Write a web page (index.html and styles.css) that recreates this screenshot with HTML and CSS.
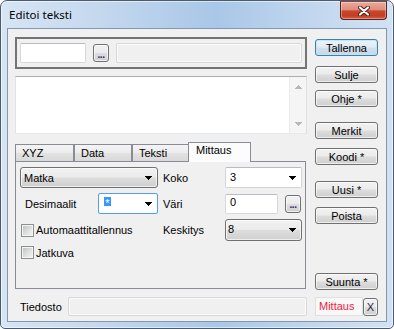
FILE: index.html
```html
<!DOCTYPE html>
<html>
<head>
<meta charset="utf-8">
<link rel="stylesheet" href="styles.css">
</head>
<body>
<div class="window">
  <div class="titlebar">
    <span class="title">Editoi teksti</span>
    <div class="close">
      <svg width="14" height="10" viewBox="0 0 14 10"><path d="M3 1.5 L11 8.5 M11 1.5 L3 8.5" stroke="#4a1b12" stroke-width="4" stroke-linecap="round"/><path d="M3 1.5 L11 8.5 M11 1.5 L3 8.5" stroke="#ffffff" stroke-width="2.2" stroke-linecap="round"/></svg>
    </div>
  </div>
  <div class="client">
    <div class="main">
      <div class="left">
        <div class="group">
          <div class="edit e1"></div>
          <div class="btn dots">...</div>
          <div class="edit disabled e2"></div>
        </div>
        <div class="memo">
          <div class="memo-text"></div>
          <div class="vscroll">
            <svg class="sarrow" width="7" height="4" viewBox="0 0 7 4"><path d="M3 0h1v1h1v1h1v1h1v1h-7v-1h1v-1h1v-1h1z" fill="#b8b8b8"/></svg>
            <svg class="sarrow" width="7" height="4" viewBox="0 0 7 4"><path d="M0 0h7v1h-1v1h-1v1h-1v1h-1v-1h-1v-1h-1v-1h-1z" fill="#b8b8b8"/></svg>
          </div>
        </div>
        <div class="tabs">
          <div class="tab t1">XYZ</div>
          <div class="tab t2">Data</div>
          <div class="tab t3">Teksti</div>
          <div class="tab active t4">Mittaus</div>
        </div>
        <div class="panel">
          <div class="pgrid">
            <div class="combo cbtn matka"><span>Matka</span><svg class="arrow" width="7" height="4" viewBox="0 0 7 4"><path d="M0 0h7v1h-1v1h-1v1h-1v1h-1v-1h-1v-1h-1v-1h-1z" fill="#000"/></svg></div>
            <div class="lbl">Koko</div>
            <div class="combo cedit"><span class="raise">3</span><svg class="arrow" width="7" height="4" viewBox="0 0 7 4"><path d="M0 0h7v1h-1v1h-1v1h-1v1h-1v-1h-1v-1h-1v-1h-1z" fill="#000"/></svg></div>

            <div class="cell">
              <span class="deslbl">Desimaalit</span>
              <div class="combo cedit focus"><span class="sel">*</span><svg class="arrow" width="7" height="4" viewBox="0 0 7 4"><path d="M0 0h7v1h-1v1h-1v1h-1v1h-1v-1h-1v-1h-1v-1h-1z" fill="#000"/></svg></div>
            </div>
            <div class="lbl">Väri</div>
            <div class="cell">
              <div class="edit e0"><span class="raise">0</span></div>
              <div class="btn dots">...</div>
            </div>

            <div class="cell chk"><span class="cb"></span><span class="cblbl">Automaattitallennus</span></div>
            <div class="lbl">Keskitys</div>
            <div class="combo cbtn k8"><span class="raise">8</span><svg class="arrow" width="7" height="4" viewBox="0 0 7 4"><path d="M0 0h7v1h-1v1h-1v1h-1v1h-1v-1h-1v-1h-1v-1h-1z" fill="#000"/></svg></div>

            <div class="cell chk"><span class="cb"></span><span class="cblbl">Jatkuva</span></div>
          </div>
        </div>
      </div>
      <div class="right">
        <div class="btn rb default b1">Tallenna</div>
        <div class="btn rb b2">Sulje</div>
        <div class="btn rb b3">Ohje *</div>
        <div class="btn rb b4">Merkit</div>
        <div class="btn rb b5">Koodi *</div>
        <div class="btn rb b6">Uusi *</div>
        <div class="btn rb b7">Poista</div>
        <div class="btn rb b8">Suunta *</div>
      </div>
    </div>
    <div class="bottom">
      <span class="flabel">Tiedosto</span>
      <div class="edit disabled file"></div>
      <div class="status">Mittaus</div>
      <div class="btn xbtn">X</div>
    </div>
  </div>
</div>
</body>
</html>
```
FILE: styles.css
```css
* { box-sizing: border-box; }
html, body { margin: 0; padding: 0; }
body {
  width: 394px;
  height: 329px;
  overflow: hidden;
  background: #ffffff;
  font-family: "Liberation Sans", Arial, sans-serif;
  font-size: 11px;
  color: #000;
}

.window {
  width: 394px;
  height: 329px;
  border: 1px solid #4b5b70;
  border-radius: 7px 7px 5px 5px;
  padding: 0 6px 6px 6px;
  display: flex;
  flex-direction: column;
  background: linear-gradient(to right, #d7e5f5 0%, #c4d8ee 25%, #a9c7e7 55%, #c0d6ee 78%, #d2e2f4 100%);
  box-shadow: inset 0 0 0 1px rgba(255,255,255,0.55);
}

.titlebar {
  height: 27px;
  display: flex;
  align-items: flex-start;
}
.title {
  font-family: "Noto Sans", "Open Sans", sans-serif;
  font-size: 11.5px;
  line-height: 16px;
  margin-top: 6px;
  padding-left: 2px;
  color: #000;
}
.close {
  margin-left: auto;
  width: 47px;
  height: 19px;
  border: 1px solid #5c2219;
  border-top-color: #8a4a40;
  border-radius: 0 0 4px 4px;
  background: linear-gradient(#eaaa9c 0%, #de8e7c 45%, #cb4a31 52%, #c13c23 78%, #d65a40 100%);
  box-shadow: inset 0 0 0 1px rgba(255,255,255,0.35);
  display: flex;
  align-items: center;
  justify-content: center;
}

.client {
  flex: 1;
  border: 1px solid #8597ae;
  background: #f0f0f0;
  padding: 8px 8px 0 7px;
  display: flex;
  flex-direction: column;
}

.main {
  display: flex;
  gap: 8px;
}
.left {
  width: 292px;
  display: flex;
  flex-direction: column;
}

.group {
  height: 32px;
  border: 2px solid #747474;
  display: flex;
  align-items: center;
  padding-left: 3px;
}

.edit {
  height: 20px;
  background: #ffffff;
  border: 1px solid #d6d8de;
  border-top-color: #b9bcc4;
  border-radius: 2px;
}
.edit.disabled {
  background: #f0f0f0;
  border-color: #d9d9d9;
  box-shadow: inset 0 0 0 1px #fafafa;
}
.e1 { width: 66px; }
.e2 { width: 186px; margin-left: 7px; }

.btn {
  border: 1px solid #707070;
  border-radius: 3px;
  background: linear-gradient(#f2f2f2 0%, #ebebeb 48%, #dddddd 52%, #cfcfcf 100%);
  box-shadow: inset 0 0 0 1px rgba(255,255,255,0.65);
  display: flex;
  align-items: center;
  justify-content: center;
  color: #000;
}
.dots {
  width: 16px;
  height: 18px;
  margin-left: 7px;
  color: #3c1f6e;
  font-weight: bold;
  font-size: 10px;
  line-height: 10px;
  padding-top: 3px;
  letter-spacing: -0.5px;
}

.memo {
  margin-top: 7px;
  height: 58px;
  background: #ffffff;
  border: 1px solid;
  border-color: #abadb3 #dbdfe6 #e3e9ef #e2e3ea;
  display: flex;
}
.memo-text { flex: 1; }
.vscroll {
  width: 17px;
  background: #f5f5f5;
  border-left: 1px solid #ececec;
  display: flex;
  flex-direction: column;
  justify-content: space-between;
  align-items: center;
  padding: 8px 0 7px 0;
}
.sarrow { display: block; }

.tabs {
  margin-top: 8px;
  height: 19px;
  display: flex;
  align-items: flex-end;
  position: relative;
  z-index: 1;
}
.tab {
  height: 17px;
  border: 1px solid #898c95;
  border-bottom: 0;
  padding-left: 6px;
  line-height: 16px;
  background: linear-gradient(#f4f4f4 0%, #ececec 48%, #e2e2e2 52%, #d9d9d9 100%);
}
.t1 { width: 59px; }
.t2 { width: 58px; margin-left: 0; }
.t3 { width: 57px; }
.tab.active {
  width: 63px;
  height: 20px;
  margin-left: -1px;
  margin-bottom: -1px;
  background: #fcfcfc;
  padding-left: 7px;
  line-height: 15px;
}

.panel {
  width: 291px;
  height: 128px;
  border: 1px solid #898c95;
  background: #f0f0f0;
}
.pgrid {
  display: grid;
  grid-template-columns: 138px 67px 77px;
  grid-template-rows: 21px 21px 22px 13px;
  row-gap: 5px;
  padding: 5px 0 0 4px;
}
.lbl {
  padding-left: 5px;
  display: flex;
  align-items: center;
}
.cell {
  display: flex;
  align-items: center;
}
.combo {
  height: 21px;
  display: flex;
  align-items: center;
}
.combo .arrow {
  margin-left: auto;
  margin-right: 5px;
  display: block;
}
.cbtn {
  border: 1px solid #707070;
  border-radius: 3px;
  background: linear-gradient(#f2f2f2 0%, #ebebeb 48%, #dddddd 52%, #cfcfcf 100%);
  box-shadow: inset 0 0 0 1px rgba(255,255,255,0.65);
  padding-left: 3px;
}
.matka { width: 138px; }
.k8 { width: 77px; height: 22px; padding-left: 2px; }
.cedit {
  width: 77px;
  background: #ffffff;
  border: 1px solid #d2d4da;
  border-top-color: #b8bbc3;
  border-radius: 2px;
  padding-left: 4px;
}
.raise { position: relative; top: -1px; }
.deslbl { padding-left: 5px; }
.cedit.focus {
  width: 60px;
  margin-left: auto;
  border-color: #569de5;
  padding-left: 5px;
}
.sel {
  display: inline-block;
  width: 7px;
  height: 12px;
  line-height: 12px;
  text-align: center;
  color: #ffffff;
  font-size: 11px;
  background: linear-gradient(to bottom, #3399ff 0, #3399ff 9px, transparent 9px);
  margin-top: -2px;
}
.e0 {
  width: 53px;
  padding-left: 4px;
  line-height: 17px;
}
.cell .dots { margin-left: 7px; }

.chk { padding-left: 1px; }
.cb {
  width: 13px;
  height: 13px;
  border: 1px solid #8e8f8f;
  background: linear-gradient(135deg, #b9bdc2 0%, #e3e3e3 60%, #f4f4f4 100%);
  box-shadow: inset 0 0 0 1px #f4f4f4;
  flex-shrink: 0;
}
.cblbl { margin-left: 2px; }

.right {
  width: 63px;
  padding-top: 2px;
  display: flex;
  flex-direction: column;
}
.rb { width: 63px; height: 17px; }
.b2 { margin-top: 10px; }
.b3 { margin-top: 7px; }
.b4 { margin-top: 15px; }
.b5 { margin-top: 9px; }
.b6 { margin-top: 16px; }
.b7 { margin-top: 9px; }
.b8 { margin-top: 49px; }
.btn.default {
  border-color: #3c7fb1;
  background: linear-gradient(#ecf3f9 0%, #e1ebf4 48%, #d3e1ec 52%, #c6d7e6 100%);
  box-shadow: inset 0 0 0 1px rgba(190,230,253,0.9);
}

.bottom {
  margin-top: 7px;
  height: 19px;
  display: flex;
  align-items: center;
}
.flabel {
  width: 53px;
  padding-left: 5px;
}
.file { width: 239px; height: 19px; }
.status {
  margin-left: 8px;
  width: 48px;
  height: 19px;
  border: 1px solid #e0e0e0;
  background: #f8f8f8;
  color: #f5213f;
  padding-left: 3px;
  line-height: 17px;
}
.xbtn {
  width: 15px;
  height: 18px;
  color: #1d1d45;
}
```
